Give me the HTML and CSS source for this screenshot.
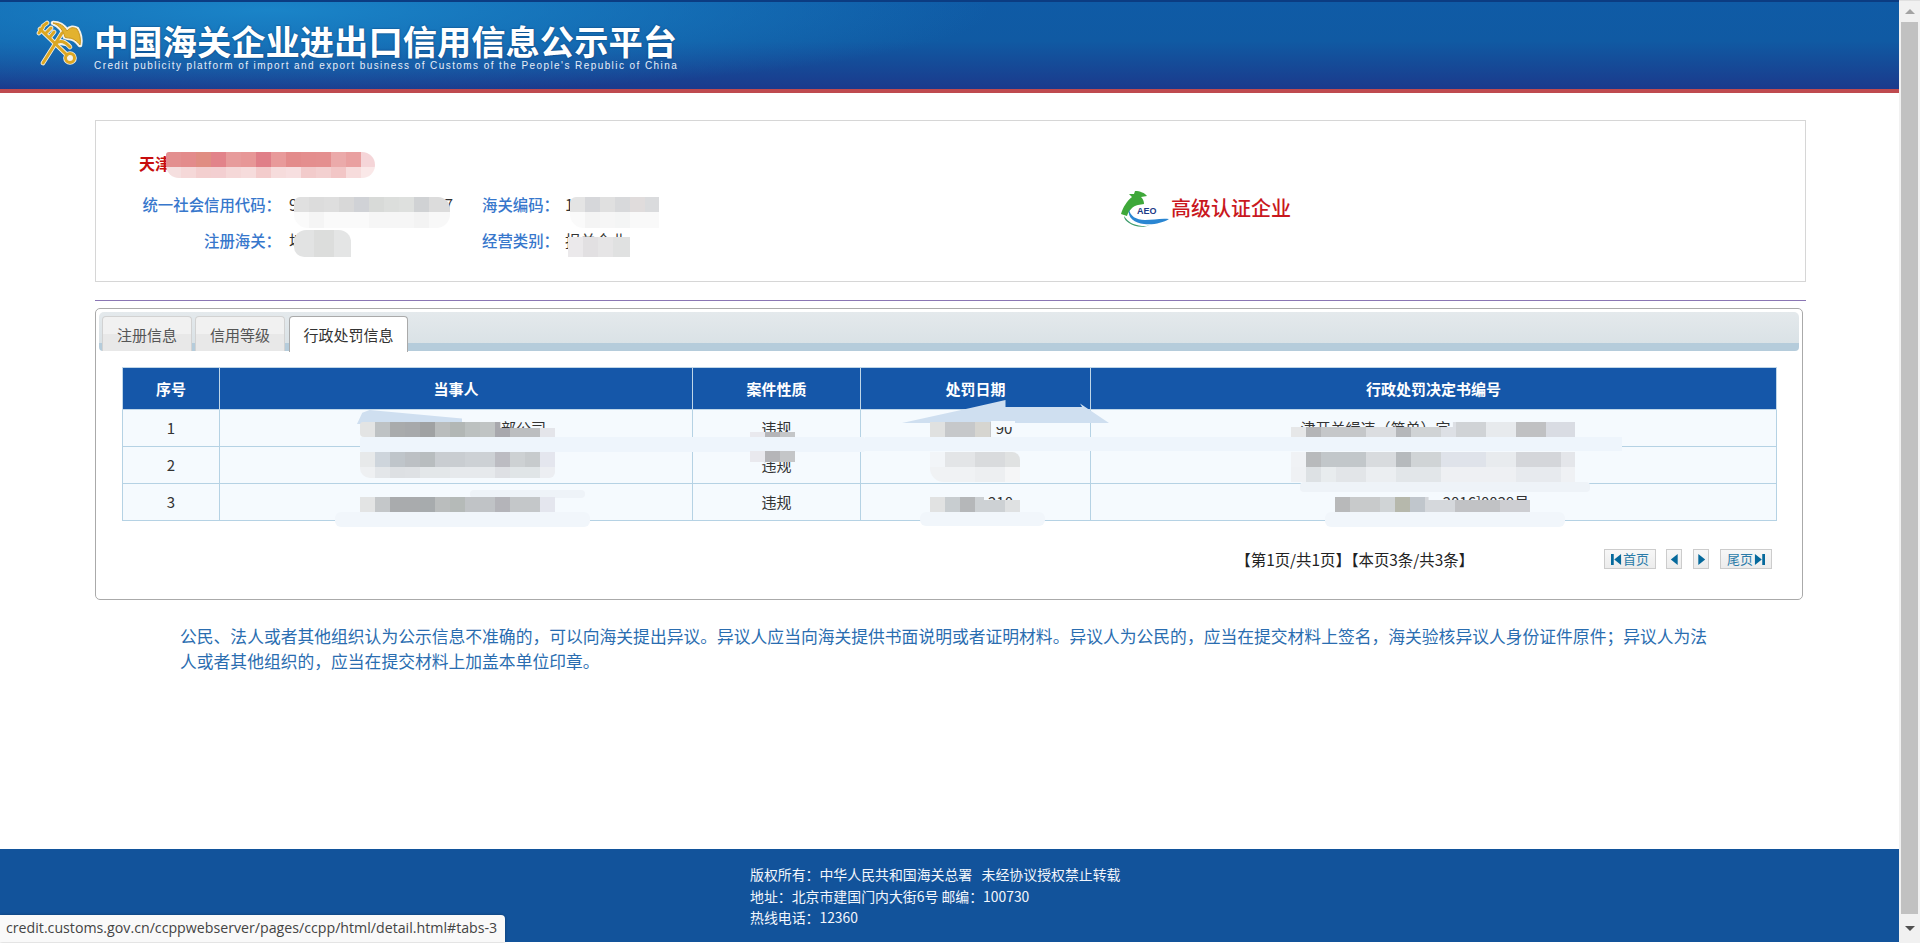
FILE: index.html
```html
<!DOCTYPE html>
<html lang="zh-CN">
<head>
<meta charset="utf-8">
<title>中国海关企业进出口信用信息公示平台</title>
<link rel="stylesheet" href="styles.css">
</head>
<body>
<div class="app">
  <div class="main">
    <header class="site-header">
      <svg class="emblem" viewBox="35 20 50 50" aria-hidden="true">
        <g class="emblem-halo">
          <path d="M40 29 L67 55 M39 33 L43 27 M43 26 L47 23 M46 33 L51 28 M50 37 L54 32 M43 63 L62 33"/>
          <circle cx="70" cy="58" r="4.5"/>
          <path d="M65 37 C63 30 59 25 53 23 C60 23 64 26 67 31 C70 27 74 27 77 29 C80 34 81 40 80 45 C77 41 73 38 69 38 Z"/>
          <path d="M55 44 C60 39 66 42 70 47"/>
        </g>
        <g class="emblem-gold">
          <path d="M40 29 L67 55 M39 33 L43 27 M43 26 L47 23 M46 33 L51 28 M50 37 L54 32 M43 63 L62 33"/>
          <circle cx="70" cy="58" r="4.5"/>
          <path class="emblem-fill" d="M65 37 C63 30 59 25 53 23 C60 23 64 26 67 31 C70 27 74 27 77 29 C80 34 81 40 80 45 C77 41 73 38 69 38 Z"/>
          <path d="M55 44 C60 39 66 42 70 47"/>
        </g>
      </svg>
      <div class="brand">
        <div class="brand-title">中国海关企业进出口信用信息公示平台</div>
        <div class="brand-sub">Credit publicity platform of import and export business of Customs of the People's Republic of China</div>
      </div>
    </header>

    <section class="company-card">
      <div class="company-info">
        <div class="company-name">天津</div>
        <div class="company-grid">
          <span class="label">统一社会信用代码：</span><span class="value value-wide"><span>9</span><span class="code-end">7</span></span>
          <span class="label">海关编码：</span><span class="value value-alt">1</span>
          <span class="label">注册海关：</span><span class="value">埠</span>
          <span class="label">经营类别：</span><span class="value value-alt">报关企业</span>
        </div>
      </div>
      <div class="aeo">
        <svg class="aeo-mark" viewBox="0 0 50 36" aria-hidden="true">
          <path class="aeo-green" d="M1 23 C3 16 7 10 12 6 L9 3 L14 3 L15 0 C20 0 25 2 27 5 L21 6 C23 8 24 10 24 13 L18 14 C13 15 9 19 7 25 C5 24 3 24 1 23 Z"/>
          <path class="aeo-blue" d="M9 18 C10 25 16 29 25 29 C33 29 41 27 49 28 C43 32 33 34 24 33 C15 32 7 27 9 18 Z"/>
          <path class="aeo-teal" d="M4 25 C8 31 13 34 22 35 C25 35 28 35 30 34 C24 37 14 36 9 32 C6 30 4 28 4 25 Z"/>
          <text class="aeo-text" x="17" y="23">AEO</text>
        </svg>
        <span class="aeo-label">高级认证企业</span>
      </div>
    </section>

    <hr class="divider">

    <section class="tabs-box">
      <div class="tabs-head">
        <a class="tab">注册信息</a>
        <a class="tab">信用等级</a>
        <a class="tab tab-active">行政处罚信息</a>
      </div>
      <table class="records">
        <colgroup>
          <col class="col-no"><col class="col-party"><col class="col-type"><col class="col-date"><col class="col-doc">
        </colgroup>
        <thead>
          <tr><th>序号</th><th>当事人</th><th>案件性质</th><th>处罚日期</th><th>行政处罚决定书编号</th></tr>
        </thead>
        <tbody>
          <tr>
            <td>1</td>
            <td><span class="gap gap-party"></span>部公司</td>
            <td>违规</td>
            <td><span class="gap gap-date1"></span>90</td>
            <td>津开关缉违（简单）字<span class="gap gap-doc1"></span></td>
          </tr>
          <tr>
            <td>2</td>
            <td></td>
            <td>违规</td>
            <td></td>
            <td></td>
          </tr>
          <tr>
            <td>3</td>
            <td></td>
            <td>违规</td>
            <td><span class="gap gap-date3"></span>210</td>
            <td><span class="gap gap-doc3"></span>2016]0029号</td>
          </tr>
        </tbody>
      </table>
      <div class="pager">
        <span class="pager-text">【第1页/共1页】【本页3条/共3条】</span>
        <div class="pager-buttons">
          <a class="page-btn page-btn-wide page-btn-first"><svg class="page-icon" viewBox="0 0 12 12"><path d="M0 0h3v12H0zM11 0v12L3.500 6z"/></svg>首页</a>
          <a class="page-btn"><svg class="page-icon" viewBox="0 0 12 12"><path d="M9.500 0v12L2 6z"/></svg></a>
          <a class="page-btn"><svg class="page-icon" viewBox="0 0 12 12"><path d="M2.500 0v12L10 6z"/></svg></a>
          <a class="page-btn page-btn-wide">尾页<svg class="page-icon" viewBox="0 0 12 12"><path d="M1 0v12L8.500 6zM9 0h3v12H9z"/></svg></a>
        </div>
      </div>
    </section>

    <p class="notice">公民、法人或者其他组织认为公示信息不准确的，可以向海关提出异议。异议人应当向海关提供书面说明或者证明材料。异议人为公民的，应当在提交材料上签名，海关验核异议人身份证件原件；异议人为法人或者其他组织的，应当在提交材料上加盖本单位印章。</p>

    <footer class="site-footer">
      <div class="footer-line">版权所有：中华人民共和国海关总署 &nbsp;&nbsp;未经协议授权禁止转载</div>
      <div class="footer-line">地址：北京市建国门内大街6号 邮编：100730</div>
      <div class="footer-line">热线电话：12360</div>
    </footer>
  </div>

  <aside class="scrollbar" aria-hidden="true">
    <div class="sb-btn sb-up"><i class="arrow-up"></i></div>
    <div class="sb-thumb"></div>
    <div class="sb-btn sb-down"><i class="arrow-down"></i></div>
  </aside>

  <!-- redaction smears lying over the page -->
  <div class="smear s-wipe-a"></div>
  <div class="smear s-wipe-b"></div>
  <div class="smear s-blue-a"></div>
  <div class="smear s-blue-b"></div>
  <div class="smear s-pale-c"></div>
  <div class="smear s-pale-d"></div>
  <div class="smear s-pale-e"></div>
  <div class="smear s-pale-f"></div>
  <div class="smear s-pale-g"></div>
  <div class="smear s-pale-h"></div>
  <div class="mosaic m-name"></div>
  <div class="mosaic m-code"></div>
  <div class="mosaic m-hs"></div>
  <div class="mosaic m-customs"></div>
  <div class="mosaic m-biz"></div>
  <div class="mosaic m-p1"></div>
  <div class="mosaic m-p2"></div>
  <div class="mosaic m-p3"></div>
  <div class="mosaic m-t1"></div>
  <div class="mosaic m-d1"></div>
  <div class="mosaic m-d2"></div>
  <div class="mosaic m-d3"></div>
  <div class="mosaic m-n1"></div>
  <div class="mosaic m-n2"></div>
  <div class="mosaic m-n3"></div>
  <div class="smear s-wipe-top"></div>
  <div class="smear s-wipe-top2"></div>

  <div class="status-bubble">credit.customs.gov.cn/ccppwebserver/pages/ccpp/html/detail.html#tabs-3</div>
</div>
</body>
</html>
```
FILE: styles.css
```css
* { box-sizing: border-box; }
html, body { margin: 0; height: 100%; overflow: hidden; background: #fff; }
body { font-family: "Noto Sans CJK SC", "Liberation Sans", sans-serif; color: #333; }

.app { position: relative; display: flex; width: 1920px; height: 943px; overflow: hidden; }
.main { width: 1899px; height: 943px; display: flex; flex-direction: column; padding-bottom: 1px; }

/* header */
.site-header {
  flex: none; height: 93px; display: flex; align-items: flex-start;
  padding: 21px 0 0 35px;
  border-top: 2px solid #0b3c82;
  border-bottom: 4px solid #bf4a4f;
  background:
    radial-gradient(ellipse 720px 85px at 270px 8px, #1a84c8 0%, rgba(26,132,200,0) 100%),
    linear-gradient(#0f5ba6 0%, #105aa3 45%, #1b3a8c 100%);
}
.emblem { width: 50px; height: 50px; flex: none; margin-top: -3px; }
.emblem-halo { fill: #f4f1e6; stroke: #f4f1e6; stroke-width: 4.6; stroke-linecap: round; stroke-linejoin: round; }
.emblem-gold { fill: none; stroke: #dca723; stroke-width: 3; stroke-linecap: round; stroke-linejoin: round; }
.emblem-fill { fill: #e3b22e; stroke: #c8941a; stroke-width: 1; }
.brand { margin-left: 9px; width: 584px; color: #fff; }
.brand-title { font-size: 34.3px; line-height: 38px; font-weight: 700; white-space: nowrap; text-shadow: 0 0 2px rgba(0,30,80,.7); margin-top: -2px; }
.brand-sub { font-family: "Liberation Sans", sans-serif; font-size: 10px; line-height: 12px; margin-top: 1px; white-space: nowrap; letter-spacing: 1.42px; color: #e6eef8; }

/* company card */
.company-card {
  flex: none; width: 1711px; height: 162px; margin: 27px 0 0 95px;
  border: 1px solid #d6d6d6; display: flex; align-items: flex-start;
}
.company-info { width: 1026px; flex: none; }
.company-name { margin: 30px 0 0 43px; font-size: 16px; line-height: 24px; font-weight: 700; color: #c70d0d; }
.company-grid { display: grid; grid-template-columns: 185px 201px 77px 1fr; row-gap: 14px; margin-top: 18px; font-size: 15.4px; line-height: 22px; }
.label { color: #3777cc; text-align: right; white-space: nowrap; font-weight: 500; }
.value { padding-left: 8px; color: #333; white-space: nowrap; }
.value-alt { padding-left: 6px; }
.value-wide { display: flex; width: 172px; justify-content: space-between; }
.aeo { display: flex; align-items: center; margin-top: 70px; }
.aeo-mark { width: 50px; height: 36px; flex: none; margin-left: -2px; }
.aeo-green { fill: #3fa83a; }
.aeo-blue { fill: #2a86d2; }
.aeo-teal { fill: #3e9c6c; }
.aeo-text { font-family: "Liberation Sans", sans-serif; font-size: 9px; font-weight: 700; fill: #1b3a86; }
.aeo-label { color: #c9181e; font-size: 20px; line-height: 26px; margin: -3px 0 0 1px; white-space: nowrap; font-weight: 500; }

.divider { flex: none; width: 1711px; height: 1px; margin: 18px 0 0 95px; border: 0; background: #8a76b4; }

/* tabs */
.tabs-box {
  flex: none; width: 1708px; margin: 7px 0 0 95px; padding: 3px 3px 30px;
  border: 1px solid #aaa; border-radius: 5px;
}
.tabs-head {
  height: 39px; display: flex; align-items: flex-start; gap: 3px; padding: 4px 0 0 3px; border-radius: 5px 5px 4px 4px;
  background: linear-gradient(#e4e9ec 0, #dae2e6 31px, #b5ccdb 31px, #b5ccdb 39px);
}
.tab {
  height: 35px; width: 90px; line-height: 36px; text-align: center; font-size: 15px; color: #555;
  border: 1px solid #d2d2d2; border-bottom: 0; border-radius: 4px 4px 0 0;
  background: linear-gradient(#f1f1f1 0, #f1f1f1 50%, #e8e8e8 50%, #e8e8e8 100%);
}
.tab-active { width: 119px; height: 36px; margin-left: 1px; position: relative; color: #333; background: #fff; border-color: #aaa; }

.records {
  width: 1654px; margin: 16px 0 0 23px; table-layout: fixed; border-collapse: collapse;
  font-size: 15px; text-align: center;
}
.col-no { width: 97px; } .col-party { width: 473px; } .col-type { width: 168px; } .col-date { width: 230px; } .col-doc { width: 686px; }
.records th { height: 42px; padding: 0; background: #1557a9; color: #fff; font-weight: 700; border: 1px solid #bfd6e8; line-height: 20px; }
.records td { height: 37px; padding: 0; background: #f5fafe; border: 1px solid #b5d2e4; line-height: 20px; color: #333; white-space: nowrap; }
.gap { display: inline-block; }
.gap-party { width: 135px; }
.gap-date1 { width: 57px; }
.gap-date3 { width: 50px; }
.gap-doc1 { width: 116px; }
.gap-doc3 { width: 105px; }

/* pager */
.pager { display: flex; justify-content: flex-end; align-items: center; margin-top: 28px; height: 20px; padding-right: 27px; }
.pager-text { font-size: 15.4px; line-height: 20px; margin-right: 130px; white-space: nowrap; color: #222; }
.pager-buttons { display: flex; gap: 11px; }
.page-btn {
  height: 20px; width: 16px; display: flex; align-items: center; justify-content: center;
  border: 1px solid #ccc; background: linear-gradient(#f7f7f7, #ececec);
  font-size: 13px; color: #2a7ba8; line-height: 18px;
}
.page-btn-wide { width: 52px; gap: 1px; }
.page-btn-first { margin-right: -1px; }
.page-icon { width: 11px; height: 13px; fill: #05699c; flex: none; }

/* notice */
.notice { flex: none; width: 1540px; margin: 24px 0 0 180px; font-size: 16.8px; line-height: 25px; color: #2a6db0; }

/* footer */
.site-footer { flex: none; height: 93px; margin-top: auto; padding: 15px 0 0 750px; background: #12539b; color: #f2f6fc; font-size: 13.9px; line-height: 21.5px; }
.footer-line { white-space: nowrap; }

/* scrollbar */
.scrollbar { flex: none; width: 21px; display: flex; flex-direction: column; background: #f1f1f1; border-top: 1px solid #e0e0e0; }
.sb-btn { flex: none; display: flex; align-items: center; justify-content: center; }
.sb-up { height: 21px; }
.sb-down { height: 29px; }
.sb-thumb { flex: 1; margin: 0 2px; background: #c1c1c1; }
.arrow-up { width: 0; height: 0; border: 5px solid transparent; border-top: 0; border-bottom: 5px solid #a3a3a3; }
.arrow-down { width: 0; height: 0; border: 5px solid transparent; border-bottom: 0; border-top: 5px solid #505050; }

/* status bubble */
.status-bubble {
  position: absolute; left: 0; bottom: 1px; width: 505px; height: 27px; padding-left: 6px;
  background: #f9f9f9; border-top-right-radius: 4px; box-shadow: 0 0 3px rgba(0,0,0,.3);
  font-family: "Open Sans", sans-serif; font-size: 14.2px; line-height: 26px; color: #444; white-space: nowrap;
}

/* redaction overlays */
.smear, .mosaic { position: absolute; }
.s-wipe-a { left: 360px; top: 437px; width: 505px; height: 15px; background: #eef5fc; border-radius: 2px; }
.s-wipe-b { left: 865px; top: 437px; width: 757px; height: 14px; background: #eef5fc; }
.s-blue-a { left: 357px; top: 410px; width: 105px; height: 14px; background: #cfdff0; clip-path: polygon(0 100%, 5% 20%, 12% 0, 100% 60%, 100% 100%); }
.s-blue-b { left: 902px; top: 400px; width: 207px; height: 23px; background: #cfdff0; clip-path: polygon(0 100%, 33% 35%, 50% 0, 50% 30%, 87% 30%, 86% 15%, 100% 100%); }
.s-pale-c { left: 335px; top: 512px; width: 255px; height: 15px; background: #f1f6fb; border-radius: 6px; }
.s-pale-d { left: 920px; top: 512px; width: 125px; height: 14px; background: #f1f6fb; border-radius: 6px; }
.s-pale-e { left: 1325px; top: 512px; width: 240px; height: 15px; background: #f1f6fb; border-radius: 6px; }
.s-pale-f { left: 470px; top: 490px; width: 115px; height: 8px; background: #eef3f8; border-radius: 4px; }
.s-pale-g { left: 1300px; top: 482px; width: 290px; height: 10px; background: #eef3f8; border-radius: 4px; }
.s-pale-h { left: 991px; top: 421px; width: 24px; height: 6px; background: #f5fafe; }
.s-wipe-top { left: 750px; top: 437px; width: 48px; height: 14px; background: #eef5fc; }
.s-wipe-top2 { left: 1290px; top: 437px; width: 300px; height: 14px; background: #eef5fc; }

.mosaic { background-repeat: no-repeat; }
.m-name {
  left: 166px; top: 152px; width: 209px; height: 26px; border-radius: 3px 13px 13px 13px; background-size: 100% 15px, 100% 11px; background-position: 0 0, 0 15px;
  background-image:
    linear-gradient(90deg,#e38f8f 0 15px,#e38b8b 15px 30px,#e08d82 30px 45px,#e2838a 45px 60px,#e79b9b 60px 75px,#e79797 75px 90px,#e07f88 90px 105px,#e89a9a 105px 120px,#e38b8b 120px 135px,#e48e8e 135px 150px,#e48f8f 150px 165px,#ebaaaa 165px 180px,#e9a0a0 180px 195px,#f5d5d8 195px),
    linear-gradient(90deg,#f5dfdf 0 15px,#f5d8d8 15px 30px,#f3cfcf 30px 45px,#f3cfd1 45px 60px,#f5d8d8 60px 75px,#f6dcdc 75px 90px,#f3cccc 90px 105px,#f6dcdc 105px 120px,#f7dfe0 120px 135px,#f2cbcb 135px 150px,#f3d0d0 150px 165px,#f2c6c6 165px 180px,#f7dcdc 180px 195px,#fae8e8 195px);
}
.m-code {
  left: 294px; top: 197px; width: 156px; height: 31px; border-radius: 6px 12px 14px 14px; background-size: 100% 15px, 100% 16px; background-position: 0 0, 0 15px;
  background-image:
    linear-gradient(90deg,#e0e0e0 0 15px,#dcdcdc 15px 30px,#dedede 30px 45px,#d8d8d8 45px 60px,#d0d2d6 60px 75px,#d8dad8 75px 90px,#dcdedc 90px 105px,#dee0de 105px 120px,#d0d2d4 120px 135px,#dcdcdc 135px),
    linear-gradient(90deg,#fafafa 0 15px,#f5f5f5 15px 30px,#fafafa 30px 75px,#f6f6f6 75px 120px,#f3f3f3 120px 135px,#f8f8f8 135px);
}
.m-hs {
  left: 570px; top: 197px; width: 89px; height: 31px; border-radius: 6px 0 0 14px; background-size: 100% 15px, 100% 16px; background-position: 0 0, 0 15px;
  background-image:
    linear-gradient(90deg,#e4e4e4 0 15px,#d6d7da 15px 30px,#e0e0e0 30px 45px,#d8d9db 45px 60px,#e0dcdc 60px 75px,#dadbdd 75px),
    linear-gradient(90deg,#fafafa 0 15px,#f4f4f4 15px 30px,#f6f6f6 30px 45px,#f4f5f5 45px 60px,#f9f9f9 60px);
}
.m-customs {
  left: 294px; top: 230px; width: 57px; height: 27px; border-radius: 12px 12px 0 10px;
  background-image: linear-gradient(90deg,#e2e3e3 0 20px,#dcdddc 20px 40px,#e4e5e5 40px);
}
.m-biz {
  left: 568px; top: 237px; width: 62px; height: 20px;
  background-image: linear-gradient(90deg,#ebe9eb 0 15px,#e2e0e2 15px 30px,#e6e5e6 30px 45px,#e0e1e1 45px);
}
.m-p1 {
  left: 360px; top: 422px; width: 195px; height: 15px; border-radius: 3px 0 0 4px; clip-path: polygon(0 0, 72% 0, 72% 40%, 100% 40%, 100% 100%, 0 100%);
  background-image: linear-gradient(90deg,#e3e4e4 0 15px,#bec2c4 15px 30px,#a9abac 30px 45px,#a7a9ab 45px 60px,#a0a2a3 60px 75px,#babdbd 75px 90px,#b2b7b5 90px 105px,#bcc1c0 105px 120px,#c0c4c4 120px 135px,#a8a8ad 135px 150px,#bcbec0 150px 180px,#e4e5ea 180px);
}
.m-p2 {
  left: 360px; top: 452px; width: 195px; height: 26px; border-radius: 0 0 6px 10px; background-size: 100% 15px, 100% 11px; background-position: 0 0, 0 15px;
  background-image:
    linear-gradient(90deg,#e7e9ea 0 15px,#ced5dc 15px 30px,#bfc5ca 30px 45px,#bcc0c4 45px 60px,#b8bdbf 60px 75px,#c9cdd1 75px 105px,#cdd1d5 105px 135px,#bcbcc2 135px 150px,#cdd1d3 150px 165px,#c7cbcd 165px 180px,#e4e6ee 180px),
    linear-gradient(90deg,#eef0f2 0 15px,#e3e6e9 15px 30px,#dde0e3 30px 45px,#dee1e4 45px 60px,#e3e7e9 60px 90px,#e6e9ec 90px 135px,#dee0e4 135px 150px,#e0e5e7 150px 180px,#eceef2 180px);
}
.m-p3 {
  left: 360px; top: 497px; width: 195px; height: 15px;
  background-image: linear-gradient(90deg,#e3e4e4 0 15px,#c4c7c9 15px 30px,#a9abad 30px 60px,#a7abad 60px 75px,#babdbd 75px 90px,#b5bab8 90px 105px,#c0c3c6 105px 135px,#b4b4b9 135px 150px,#c4c7c9 150px 180px,#e4e6ee 180px);
}
.m-t1 {
  left: 750px; top: 432px; width: 45px; height: 30px;
  background-image: linear-gradient(90deg,#e9e9ee 0 15px,#b5b5b8 15px 30px,#c4c6c8 30px);
}
.m-d1 {
  left: 930px; top: 422px; width: 61px; height: 15px;
  background-image: linear-gradient(90deg,#e0e1e0 0 15px,#c6c8ca 15px 45px,#d6d5d0 45px 60px,#c6c8ca 60px);
}
.m-d2 {
  left: 930px; top: 452px; width: 90px; height: 30px; border-radius: 0 8px 0 14px; background-size: 100% 15px, 100% 15px; background-position: 0 0, 0 15px;
  background-image:
    linear-gradient(90deg,#f2f5f8 0 15px,#e3e5e7 15px 45px,#d9dbdd 45px 75px,#e0e2e2 75px),
    linear-gradient(90deg,#f0f2f4 0 45px,#edeff1 45px 75px,#f5f6f7 75px);
}
.m-d3 {
  left: 930px; top: 497px; width: 90px; height: 15px; clip-path: polygon(0 0, 60% 0, 60% 20%, 100% 20%, 100% 100%, 0 100%);
  background-image: linear-gradient(90deg,#e1e2e2 0 15px,#c8cdd0 15px 30px,#b5b7b9 30px 45px,#cdd1d4 45px 75px,#dfe1e2 75px);
}
.m-n1 {
  left: 1291px; top: 422px; width: 284px; height: 15px; clip-path: polygon(0 33%, 57% 33%, 57% 0, 100% 0, 100% 100%, 0 100%);
  background-image: linear-gradient(90deg,#e6e7e8 0 15px,#b4b5b7 15px 30px,#c5c7c9 30px 75px,#dbdde0 75px 105px,#b5b7ba 105px 120px,#d0d3d5 120px 150px,#dde0e5 150px 165px,#d0d3d6 165px 195px,#e7eaed 195px 225px,#c0c1c3 225px 255px,#d9dce3 255px);
}
.m-n2 {
  left: 1291px; top: 452px; width: 284px; height: 30px; background-size: 100% 15px, 100% 15px; background-position: 0 0, 0 15px;
  background-image:
    linear-gradient(90deg,#f0f2f5 0 15px,#b8babc 15px 30px,#c2c7ca 30px 75px,#d8dbde 75px 105px,#b6babd 105px 120px,#d0d4d6 120px 150px,#dfe3ea 150px 195px,#e8ebee 195px 225px,#d4d6da 225px 270px,#e4e6ea 270px),
    linear-gradient(90deg,#eff1f4 0 15px,#dde1e4 15px 30px,#e8ecee 30px 45px,#e2e5e8 45px 75px,#ebeef1 75px 105px,#e2e6e9 105px 150px,#eef0f3 150px 225px,#e7eaee 225px 270px,#eff1f4 270px);
}
.m-n3 {
  left: 1335px; top: 497px; width: 195px; height: 15px; clip-path: polygon(0 0, 48% 0, 48% 20%, 100% 20%, 100% 100%, 0 100%);
  background-image: linear-gradient(90deg,#b8b9ba 0 15px,#c8cacb 15px 45px,#d0d4d6 45px 60px,#b6b8ac 60px 75px,#c0c6cc 75px 90px,#d5d8dc 90px 120px,#c1c2c5 120px 165px,#cdced2 165px);
}
```
